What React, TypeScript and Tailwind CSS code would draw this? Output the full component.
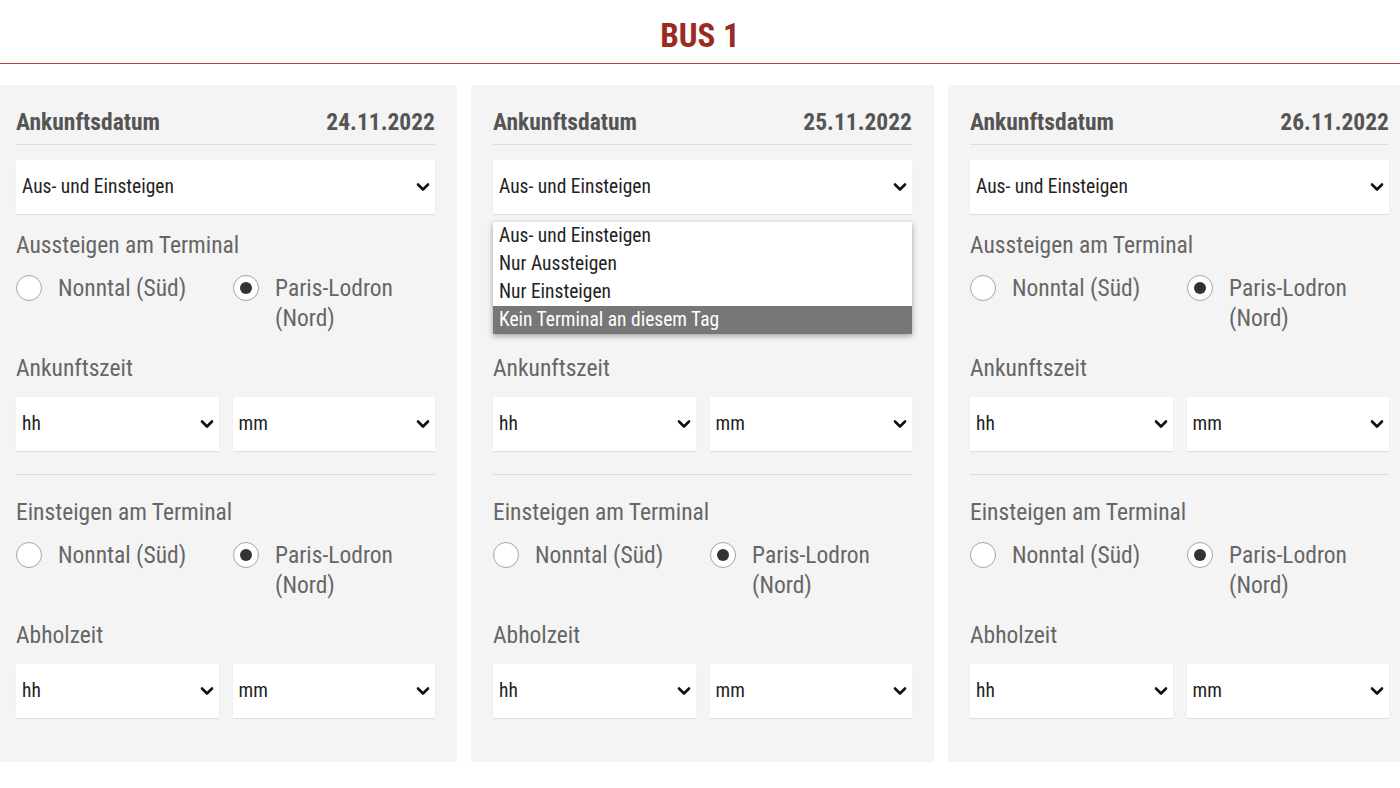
import React from "react";

const days = [
  { date: "24.11.2022", open: false },
  { date: "25.11.2022", open: true },
  { date: "26.11.2022", open: false },
];

const options = [
  "Aus- und Einsteigen",
  "Nur Aussteigen",
  "Nur Einsteigen",
  "Kein Terminal an diesem Tag",
];

function Chevron() {
  return (
    <svg width="14" height="10" viewBox="0 0 14 10" className="shrink-0">
      <polyline
        points="2,2.5 7,7.5 12,2.5"
        fill="none"
        stroke="#111"
        strokeWidth="2.6"
        strokeLinecap="round"
        strokeLinejoin="round"
      />
    </svg>
  );
}

function SelectBox({ value }: { value: string }) {
  return (
    <div className="flex h-[54px] flex-1 items-center justify-between bg-white pl-[6px] pr-[5px] text-[19.5px] text-[#222] shadow-[0_1px_1px_rgba(0,0,0,0.08)]">
      <span>{value}</span>
      <Chevron />
    </div>
  );
}

function Radio({ label, checked }: { label: React.ReactNode; checked?: boolean }) {
  return (
    <div className="flex items-start">
      <span className="mt-[2px] flex h-[26px] w-[26px] shrink-0 items-center justify-center rounded-full border border-[#a5a5a5] bg-white">
        {checked && <span className="h-[12px] w-[12px] rounded-full bg-[#333]" />}
      </span>
      <span className="ml-[16px] text-[23.5px] leading-[30px] text-[#666]">{label}</span>
    </div>
  );
}

function RadioGroup() {
  return (
    <div className="mt-[13px] flex">
      <div className="w-[217px]">
        <Radio label="Nonntal (Süd)" />
      </div>
      <Radio
        checked
        label={
          <>
            Paris-Lodron
            <br />
            (Nord)
          </>
        }
      />
    </div>
  );
}

function TimeSelects() {
  return (
    <div className="mt-[14px] flex gap-[14px]">
      <SelectBox value="hh" />
      <SelectBox value="mm" />
    </div>
  );
}

function DayPanel({ date, open }: { date: string; open: boolean }) {
  return (
    <div className="w-[463px] shrink-0 bg-[#f4f4f4] px-[22px] pb-[44px] pt-[22px]">
      <div className="flex items-center justify-between border-b border-[#dcdcdc] pb-[7px] text-[23.5px] font-bold leading-[30px] text-[#555]">
        <span>Ankunftsdatum</span>
        <span>{date}</span>
      </div>
      <div className="relative mt-[15px] flex">
        <SelectBox value="Aus- und Einsteigen" />
        {open && (
          <div className="absolute left-0 right-0 top-[62px] z-10 bg-white shadow-[0_2px_6px_rgba(0,0,0,0.35)]">
            {options.map((o, i) => (
              <div
                key={o}
                className={
                  i === 3
                    ? "h-[28px] bg-[#777] pl-[6px] text-[19.5px] leading-[28px] text-white"
                    : "h-[28px] pl-[6px] text-[19.5px] leading-[28px] text-[#222]"
                }
              >
                {o}
              </div>
            ))}
          </div>
        )}
      </div>

      <div className="mt-[16px] text-[23.5px] leading-[30px] text-[#666]">Aussteigen am Terminal</div>
      <RadioGroup />

      <div className="mt-[20px] text-[23.5px] leading-[30px] text-[#666]">Ankunftszeit</div>
      <TimeSelects />

      <div className="mt-[23px] border-t border-[#dcdcdc]" />

      <div className="mt-[22px] text-[23.5px] leading-[30px] text-[#666]">Einsteigen am Terminal</div>
      <RadioGroup />

      <div className="mt-[20px] text-[23.5px] leading-[30px] text-[#666]">Abholzeit</div>
      <TimeSelects />
    </div>
  );
}

export default function App() {
  return (
    <div className="h-[788px] w-[1400px] overflow-hidden bg-white font-['Roboto',sans-serif] font-stretch-condensed">
      <div className="flex h-[63px] justify-center pt-[16px]">
        <h1 className="text-[33px] font-bold leading-[40px] text-[#9b2a22]">BUS 1</h1>
      </div>
      <div className="h-px bg-[#a84a44]" />
      <div className="ml-[-6px] mt-[21px] flex gap-[14px]">
        {days.map((d) => (
          <DayPanel key={d.date} date={d.date} open={d.open} />
        ))}
      </div>
    </div>
  );
}
